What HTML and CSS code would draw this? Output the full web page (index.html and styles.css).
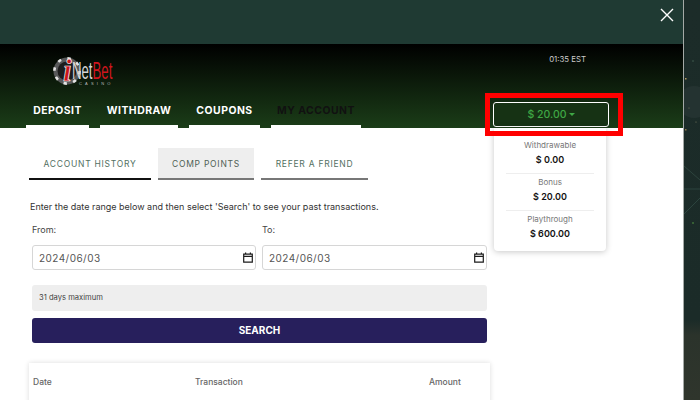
FILE: index.html
```html
<!DOCTYPE html>
<html lang="en">
<head>
<meta charset="utf-8">
<title>Account</title>
<link rel="stylesheet" href="styles.css">
</head>
<body>
<div class="backdrop">
  <svg class="sparkle" width="16" height="400" viewBox="0 0 16 400" aria-hidden="true">
    <circle cx="10" cy="102" r="16" fill="#2b3b38" opacity=".55"/>
    <path d="M0 166 L16 180 M0 214 L16 198 M0 189 L16 189" stroke="#3a5a50" stroke-width="1" fill="none" opacity=".55"/>
    <path d="M1 78 h1.5 v1.5 h-1.5z" fill="#b09a62"/>
    <path d="M1 129 h1.5 v1.5 h-1.5z" fill="#8f7a4a"/>
    <circle cx="5" cy="108" r=".6" fill="#7a7a60"/><circle cx="12" cy="122" r=".6" fill="#7a7a60"/>
    <circle cx="9" cy="61" r=".7" fill="#4d6a5a"/><circle cx="9" cy="223" r="1" fill="#3f7038"/>
  </svg>
</div>
<div class="modal">
  <div class="topbar">
    <svg class="close" width="14" height="14" viewBox="0 0 14 14" aria-hidden="true"><path d="M1 1 L13 13 M13 1 L1 13" stroke="#fff" stroke-width="1.4" fill="none"/></svg>
  </div>
  <header class="header">
    <div class="brand-row">
      <div class="logo">
        <svg class="chip" width="28" height="32" viewBox="0 0 28 32" aria-hidden="true">
          <circle cx="14" cy="16" r="13.5" fill="#58595a"/>
          <circle cx="14" cy="16" r="12.6" fill="none" stroke="#e4e4e4" stroke-width="2.6" stroke-dasharray="3.4 6.5"/>
          <circle cx="14" cy="16" r="9.5" fill="#1c1c1c"/>
        </svg>
        <span class="logo-i">i</span>
        <span class="logo-word"><span class="logo-net">Net</span><span class="logo-bet">Bet</span></span>
        <span class="logo-casino">CASINO</span>
      </div>
      <div class="clock">01:35 EST</div>
    </div>
    <div class="nav-row">
      <nav class="nav">
        <a class="nav-item w63">DEPOSIT</a>
        <a class="nav-item w78">WITHDRAW</a>
        <a class="nav-item w71">COUPONS</a>
        <a class="nav-item nav-active w90">MY ACCOUNT</a>
      </nav>
      <div class="balance-wrap">
        <button class="balance">$ 20.00<span class="caret"></span></button>
      </div>
    </div>
  </header>
  <main class="content">
    <div class="left">
      <div class="tabs">
        <a class="tab tab-active t122">ACCOUNT HISTORY</a>
        <a class="tab tab-grey t96">COMP POINTS</a>
        <a class="tab t107">REFER A FRIEND</a>
      </div>
      <p class="intro">Enter the date range below and then select 'Search' to see your past transactions.</p>
      <div class="fields">
        <div class="field">
          <label class="label">From:</label>
          <div class="date"><span>2024/06/03</span><svg width="10" height="11" viewBox="0 0 10 11" aria-hidden="true"><path d="M.7 2.2h8.6v8H.7z M.7 4.4h8.6 M2.6 .4v2 M7.4 .4v2" stroke="#1c1c1c" stroke-width="1.2" fill="none"/></svg></div>
        </div>
        <div class="field">
          <label class="label">To:</label>
          <div class="date"><span>2024/06/03</span><svg width="10" height="11" viewBox="0 0 10 11" aria-hidden="true"><path d="M.7 2.2h8.6v8H.7z M.7 4.4h8.6 M2.6 .4v2 M7.4 .4v2" stroke="#1c1c1c" stroke-width="1.2" fill="none"/></svg></div>
        </div>
      </div>
      <div class="note">31 days maximum</div>
      <button class="search">SEARCH</button>
      <div class="table">
        <span class="col-date">Date</span>
        <span class="col-tx">Transaction</span>
        <span class="col-amt">Amount</span>
      </div>
    </div>
    <aside class="dropdown">
      <div class="stat"><div class="stat-label">Withdrawable</div><div class="stat-value">$ 0.00</div></div>
      <div class="stat"><div class="stat-label">Bonus</div><div class="stat-value">$ 20.00</div></div>
      <div class="stat"><div class="stat-label">Playthrough</div><div class="stat-value">$ 600.00</div></div>
    </aside>
  </main>
  <div class="highlight"></div>
</div>
</body>
</html>
```
FILE: styles.css
```css
* { box-sizing: border-box; }
html, body { margin: 0; height: 400px; overflow: hidden; }
body { background: #1b2b28; font-family: Inter, "Liberation Sans", sans-serif; position: relative; }
.backdrop { position: absolute; left: 684px; top: 0; width: 16px; height: 400px; background: linear-gradient(#1c2c29 0, #1b2b28 320px, #2b332b 335px, #2f352c 400px); }
.sparkle { display: block; }
.modal { width: 684px; height: 400px; position: relative; overflow: hidden; background: #fff; border-right: 1px solid #a4a9a6; }
.topbar { height: 44px; margin-right: -1px; background: #1f3a33; position: relative; }
.close { position: absolute; left: 660px; top: 8px; }
.header { height: 84px; margin-right: -1px; background: linear-gradient(#000, #1b3d18); display: flex; flex-direction: column; }
.brand-row { height: 52px; display: flex; justify-content: space-between; }
.logo { position: relative; margin: 11px 0 0 53px; width: 62px; height: 32px; }
.chip { position: absolute; left: 0; top: 0; }
.logo-i { position: absolute; left: 10px; top: 1px; font: italic 700 31px/30px "Liberation Serif", serif; color: #c9141c; -webkit-text-stroke: .7px #fff; }
.logo-word { position: absolute; left: 19px; top: 7px; display: flex; font: 24px/18px "Liberation Sans Narrow", "Liberation Sans", sans-serif; transform: scaleX(.55); transform-origin: 0 0; white-space: nowrap; }
.logo-net { color: #d6d6d6; }
.logo-bet { color: #d0161e; }
.logo-casino { position: absolute; left: 26px; top: 26px; font: 4px/5px "Liberation Sans", sans-serif; letter-spacing: 3.2px; color: #bbb; white-space: nowrap; }
.clock { margin: 9px 98px 0 0; font-size: 7.8px; line-height: 12px; color: #ccc; }
.nav-row { flex: 1; display: flex; justify-content: space-between; padding-left: 26px; }
.nav { display: flex; gap: 11px; height: 32px; }
.nav-item { height: 32px; padding-top: 8px; font-size: 10.4px; font-weight: 700; letter-spacing: .5px; line-height: 14px; color: #fff; text-align: center; white-space: nowrap; border-bottom: 3px solid #fff; }
.nav-active { color: #111; }
.w63 { width: 63px; }
.w78 { width: 78px; }
.w71 { width: 71px; }
.w90 { width: 90px; }
.balance-wrap { padding: 6px 75px 0 0; }
.balance { display: block; width: 116px; height: 25px; background: #163214; border: 1px solid #fff; border-radius: 3px; color: #3fa845; font: 500 10.5px Inter, sans-serif; padding: 0; }
.caret { display: inline-block; margin-left: 2px; vertical-align: 2px; border: 3px solid transparent; border-top-color: #3fa845; border-bottom: 0; }
.content { display: flex; position: relative; padding-left: 29px; }
.left { width: 461px; }
.tabs { display: flex; gap: 7px; margin-top: 20px; }
.tab { height: 32px; padding-top: 10px; font-size: 8.5px; letter-spacing: .75px; line-height: 12px; color: #52705f; text-align: center; border-bottom: 2px solid #777; white-space: nowrap; }
.tab-active { border-bottom-color: #111; }
.tab-grey { background: #eee; color: #4f5f55; }
.t122 { width: 122px; }
.t96 { width: 96px; }
.t107 { width: 107px; }
.intro { margin: 20px 0 0 1px; font-size: 9px; line-height: 13px; color: #333; white-space: nowrap; }
.fields { display: flex; gap: 6px; margin: 11px 0 0 3px; }
.field { width: 224px; }
.field:last-child { width: 225px; }
.label { display: block; font-size: 9px; line-height: 12px; color: #444; }
.date { margin-top: 9px; height: 25px; border: 1px solid #d6d6d6; border-radius: 3px; padding: 0 2px 0 6px; display: flex; align-items: center; justify-content: space-between; font-size: 10px; letter-spacing: .45px; color: #555; }
.note { margin: 15px 0 0 3px; width: 455px; height: 26px; background: #eee; border-radius: 3px; padding: 0 7px; font-size: 7.6px; line-height: 25px; color: #444; }
.search { display: block; margin: 7px 0 0 3px; width: 455px; height: 25px; background: #271f5c; border: 0; border-radius: 3px; color: #fff; font: 700 10px Inter, sans-serif; padding: 0 0 2px; }
.table { margin-top: 20px; width: 461px; height: 60px; background: #fff; box-shadow: 0 0 5px rgba(0,0,0,.14); display: flex; padding: 13px 4px 0; font-size: 8.5px; font-weight: 500; line-height: 12px; color: #666; }
.col-date { width: 162px; }
.col-tx { width: 234px; }
.dropdown { position: absolute; left: 494px; top: 0; width: 112px; height: 123px; background: #fff; border-radius: 0 0 4px 4px; box-shadow: 0 1px 6px rgba(0,0,0,.22); padding: 9px 12px 0; text-align: center; }
.stat { height: 37px; padding-top: 2px; border-bottom: 1px solid #eee; }
.stat:last-child { border-bottom: 0; }
.stat-label { font-size: 8px; line-height: 12px; color: #777; }
.stat-value { margin-top: 2px; font-size: 9px; font-weight: 600; line-height: 14px; color: #111; }
.highlight { position: absolute; left: 485px; top: 93px; width: 138px; height: 43px; border: 5px solid #f00; }
```
